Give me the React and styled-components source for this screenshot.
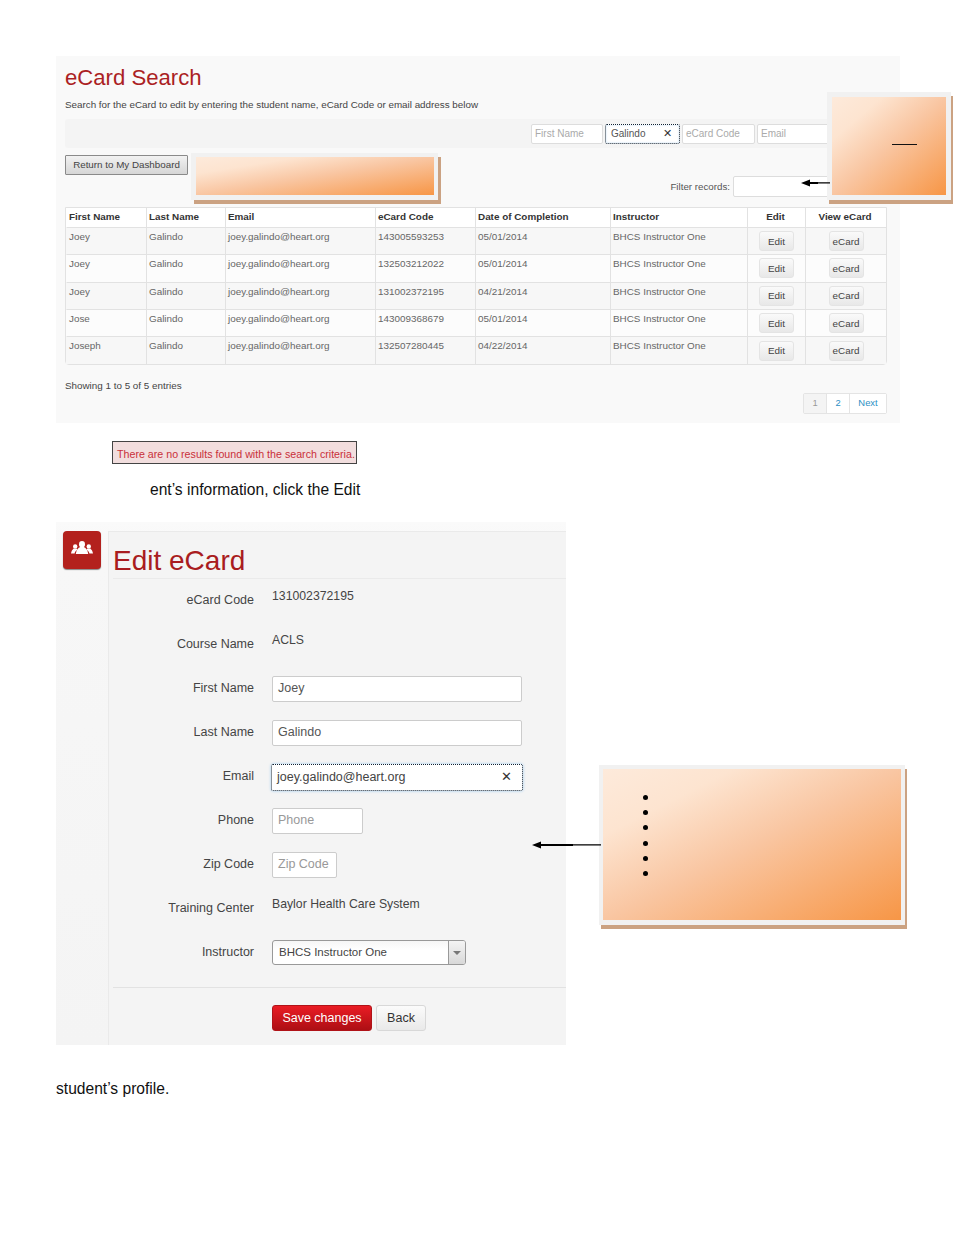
import React from "react";
import styled, { createGlobalStyle, css } from "styled-components";

const Global = createGlobalStyle`
  html, body { margin: 0; padding: 0; background: #fff; }
  body { font-family: "Liberation Sans", Arial, sans-serif; color: #555; }
  * { box-sizing: border-box; }
`;

const Page = styled.div`
  position: relative;
  width: 954px;
  height: 1235px;
  padding: 56px 0 0 56px;
  overflow: hidden;
`;

const SearchPanel = styled.section`
  width: 844px;
  height: 367px;
  padding: 9px 13px 0 9px;
  background: #f9f9f9;
`;

const SearchTitle = styled.h1`
  margin: 0;
  font-size: 22.15px;
  line-height: 26px;
  font-weight: 400;
  color: #ab1f24;
`;

const Lead = styled.p`
  margin: 7px 0 0;
  font-size: 9.84px;
  line-height: 13px;
  color: #444;
`;

const Toolbar = styled.div`
  display: flex;
  justify-content: flex-end;
  align-items: center;
  gap: 2px;
  height: 29px;
  margin-top: 8px;
  background: #f4f4f4;
  border-radius: 3px;
`;

const SmallField = styled.div`
  display: flex;
  align-items: center;
  justify-content: space-between;
  width: ${(p) => p.$w}px;
  height: 20px;
  padding: 0 7px 0 3px;
  font-size: 10px;
  color: ${(p) => (p.$filled ? "#555" : "#aaa")};
  background: #fff;
  border: 1px solid #ddd;
  border-radius: 2px;
  ${(p) =>
    p.$focus &&
    css`
      padding-left: 5px;
      border: 1px dotted #123;
      box-shadow: inset 0 0 2px #b9d8f2;
    `}
`;

const Clear = styled.span`
  font-size: ${(p) => p.$size}px;
  line-height: 1;
  color: #333;
`;

const ActionRow = styled.div`
  display: flex;
  justify-content: space-between;
  height: 59px;
  padding-top: 7px;
`;

const ReturnButton = styled.button`
  width: 123px;
  height: 20px;
  padding: 0 0 2px;
  font: 9.8px "Liberation Sans", Arial, sans-serif;
  color: #444;
  background: linear-gradient(#f2f2f2, #d6d6d6);
  border: 1px solid #8a8a8a;
  border-radius: 1px;
`;

const FilterWrap = styled.label`
  display: flex;
  align-items: center;
  gap: 3px;
  height: 22px;
  margin-top: 20px;
  margin-right: -4px;
  font-size: 9.75px;
  color: #555;
`;

const FilterInput = styled.div`
  width: 158px;
  height: 21px;
  background: #fff;
  border: 1px solid #ddd;
  border-radius: 2px;
`;

const Table = styled.table`
  width: 822px;
  table-layout: fixed;
  border-collapse: separate;
  border-spacing: 0;
  border: 1px solid #e2e2e2;
  border-radius: 0 0 4px 4px;
  font-size: 9.9px;
`;

const Th = styled.th`
  height: 20px;
  padding: 0 2px 2px ${(p) => (p.$center ? "0" : "2px")};
  font-weight: 700;
  color: #333;
  text-align: ${(p) => (p.$center ? "center" : "left")};
  background: #fff;
  border-left: 1px solid ${(p) => (p.$first ? "transparent" : "#e2e2e2")};
  border-bottom: 1px solid #e2e2e2;
`;

const Td = styled.td`
  height: 27.3px;
  padding: ${(p) => (p.$center ? "0" : "3px 2px 0 2px")};
  vertical-align: ${(p) => (p.$center ? "middle" : "top")};
  text-align: ${(p) => (p.$center ? "center" : "left")};
  line-height: 12px;
  color: #666;
  background: ${(p) => (p.$odd ? "#f7f7f7" : "#fcfcfc")};
  border-left: 1px solid ${(p) => (p.$first ? "transparent" : "#e2e2e2")};
  border-bottom: ${(p) => (p.$last ? "0" : "1px solid #e2e2e2")};
`;

const RowButton = styled.button`
  width: 35px;
  height: 20px;
  padding: 0;
  font: 9.9px "Liberation Sans", Arial, sans-serif;
  color: #444;
  background: linear-gradient(#fafafa, #e8e8e8);
  border: 1px solid #e4e4e4;
  border-radius: 3px;
  vertical-align: middle;
`;

const TableFoot = styled.div`
  display: grid;
  grid-template-rows: 13px 21px;
  width: 822px;
  margin-top: 15px;
  font-size: 9.85px;
  color: #444;
`;

const Pager = styled.div`
  display: flex;
  justify-self: end;
  height: 21px;
  border: 1px solid #e4e4e4;
  border-radius: 2px;
  background: #fff;
`;

const PageItem = styled.span`
  display: flex;
  align-items: center;
  justify-content: center;
  width: ${(p) => p.$w}px;
  padding-bottom: 2px;
  font-size: 9.4px;
  color: ${(p) => (p.$off ? "#999" : "#2d8fc4")};
  background: ${(p) => (p.$off ? "#f4f4f4" : "#fff")};
  & + & { border-left: 1px solid #e4e4e4; }
`;

const Alert = styled.div`
  width: 245px;
  height: 23px;
  margin: 18px 0 0 56px;
  padding-left: 4px;
  font-size: 10.68px;
  line-height: 24px;
  white-space: nowrap;
  color: #c9303a;
  background: #f2dede;
  border: 1px solid #444;
`;

const DocText = styled.p`
  margin: ${(p) => p.$top}px 0 0 ${(p) => p.$left}px;
  font-size: 15.6px;
  line-height: 18px;
  color: #111;
`;

const EditPanel = styled.section`
  display: flex;
  width: 510px;
  height: 523px;
  margin-top: 23px;
  background: linear-gradient(#fafafa, #f7f7f7 8%, #f4f4f4);
`;

const IconRail = styled.div`
  flex: 0 0 52px;
  padding: 9px 0 0 7px;
`;

const IconTile = styled.div`
  display: flex;
  align-items: center;
  justify-content: center;
  width: 38px;
  height: 38px;
  padding-bottom: 5px;
  background: #b3211d;
  border-radius: 4px;
  box-shadow: 0 1px 1px #888;
`;

const FormColumn = styled.div`
  flex: 1;
  margin-top: 9px;
  background: #f4f4f4;
  border-top: 1px solid #eaeaea;
  border-left: 1px solid #eaeaea;
`;

const FormTitle = styled.h2`
  height: 47px;
  margin: 0 0 0 4px;
  padding-top: 12px;
  font-size: 28px;
  line-height: 34px;
  font-weight: 400;
  color: #a91c20;
  border-bottom: 1px solid #eaeaea;
`;

const FormRows = styled.div`
  display: grid;
  grid-auto-rows: 44px;
  padding-top: 9px;
`;

const FormRow = styled.div`
  display: grid;
  grid-template-columns: 145px 1fr;
  column-gap: 18px;
  font-size: 12.5px;
`;

const FieldLabel = styled.div`
  line-height: 24px;
  text-align: right;
  color: #444;
`;

const StaticValue = styled.div`
  font-size: 12.25px;
  line-height: 16px;
  color: #444;
`;

const TextField = styled.div`
  display: flex;
  align-items: center;
  justify-content: space-between;
  width: ${(p) => p.$w}px;
  height: 26px;
  padding: 0 10px 2px 5px;
  font-size: 12.5px;
  color: ${(p) => (p.$placeholder ? "#999" : "#555")};
  background: #fff;
  border: 1px solid #ccc;
  border-radius: 2px;
  white-space: nowrap;
  ${(p) =>
    p.$focus &&
    css`
      margin: 0 0 0 -1px;
      height: 27px;
      color: #444;
      border: 1px dotted #123;
      box-shadow: 0 0 3px #9cc8ee;
    `}
`;

const SelectBox = styled.div`
  display: flex;
  width: 194px;
  height: 25px;
  font-size: 11.5px;
  color: #444;
  background: linear-gradient(#f6f6f6, #fff 40%);
  border: 1px solid #999;
  border-radius: 3px;
  overflow: hidden;
`;

const SelectText = styled.span`
  flex: 1;
  padding-left: 6px;
  line-height: 23px;
`;

const SelectArrow = styled.span`
  display: flex;
  align-items: center;
  justify-content: center;
  width: 17px;
  background: linear-gradient(#f4f4f4, #d8d8d8);
  border-left: 1px solid #999;
  &::after {
    content: "";
    border-style: solid;
    border-width: 4px 4px 0;
    border-color: #777 transparent transparent;
  }
`;

const FormFooter = styled.div`
  display: flex;
  gap: 4px;
  margin: 3px 0 0 4px;
  padding: 17px 0 0 159px;
  border-top: 1px solid #e2e2e2;
`;

const SaveButton = styled.button`
  width: 100px;
  height: 26px;
  padding: 0;
  font: 12.5px "Liberation Sans", Arial, sans-serif;
  color: #fff;
  background: linear-gradient(#ea1c24, #ad0f14);
  border: 1px solid #b01318;
  border-radius: 3px;
`;

const BackButton = styled.button`
  width: 50px;
  height: 26px;
  padding: 0;
  font: 12.5px "Liberation Sans", Arial, sans-serif;
  color: #333;
  background: linear-gradient(#fbfbfb, #e9e9e9);
  border: 1px solid #d8d8d8;
  border-radius: 3px;
`;

const placements = {
  banner: css`
    left: 191px; top: 153px; width: 247px; height: 47px;
    padding: 4px 4px 5px 5px;
    box-shadow: 3px 4px 0 #cba282;
  `,
  corner: css`
    left: 827px; top: 92px; width: 124px; height: 108px;
    padding: 5px;
    box-shadow: 2px 4px 0 #cba282;
  `,
  side: css`
    left: 599px; top: 765px; width: 306px; height: 160px;
    padding: 4px 4px 5px;
    box-shadow: 2px 4px 0 #cba282;
  `,
};

const Callout = styled.aside`
  position: absolute;
  background: #f1f1f1;
  ${(p) => placements[p.$at]}
`;

const CalloutFill = styled.div`
  position: relative;
  height: 100%;
  background: linear-gradient(to bottom right, #fdeadb 0%, #fde4d0 22%, #f9c6a2 50%, #f79646 100%);
`;

const Dash = styled.span`
  position: absolute;
  left: 60px;
  top: 47px;
  width: 25px;
  height: 1px;
  background: #111;
`;

const Bullets = styled.ul`
  display: flex;
  flex-direction: column;
  gap: 10.2px;
  margin: 0;
  padding: 26px 0 0 40px;
  list-style: none;
`;

const Bullet = styled.li`
  width: 5px;
  height: 5px;
  background: #000;
  border-radius: 50%;
`;

const ArrowMark = styled.svg`
  position: absolute;
  ${(p) =>
    p.$at === "filter"
      ? css`left: 800px; top: 178px;`
      : css`left: 531px; top: 840px;`}
`;

const Arrow = ({ at, w }) => {
  const mid = Math.round(w * 0.6);
  return (
    <ArrowMark $at={at} width={w} height="10" viewBox={`0 0 ${w} 10`} aria-hidden="true">
      <path d={`M1 5 L10 1.500 V4 H${mid} V4.300 H${w} V5.500 H${mid} V6 H10 V8.500 Z`} fill="#000" />
    </ArrowMark>
  );
};

const GroupIcon = () => (
  <svg width="22" height="13" viewBox="0 0 22 13" fill="#fff" aria-hidden="true">
    <ellipse cx="11" cy="3.300" rx="3" ry="3.300" />
    <path d="M4.800 13c.3-3.300 2-6 4.400-7h3.600c2.400 1 4.100 3.700 4.400 7z" />
    <circle cx="4.200" cy="5.400" r="2.200" />
    <path d="M0 12.400c.3-2.300 1.300-4 2.800-5h2.600l1.200 1.200C5 9.800 3.900 11 3.600 12.400z" />
    <circle cx="17.800" cy="5.400" r="2.200" />
    <path d="M22 12.400c-.3-2.300-1.300-4-2.800-5h-2.600l-1.200 1.200c1.600 1.200 2.700 2.400 3 3.800z" />
  </svg>
);

const rows = [
  ["Joey", "143005593253", "05/01/2014"],
  ["Joey", "132503212022", "05/01/2014"],
  ["Joey", "131002372195", "04/21/2014"],
  ["Jose", "143009368679", "05/01/2014"],
  ["Joseph", "132507280445", "04/22/2014"],
];

const colWidths = [80, 79, 150, 100, 135, 137, 58, 81];

export default function App() {
  return (
    <Page>
      <Global />
      <SearchPanel>
        <SearchTitle>eCard Search</SearchTitle>
        <Lead>Search for the eCard to edit by entering the student name, eCard Code or email address below</Lead>
        <Toolbar>
          <SmallField $w={72}>First Name</SmallField>
          <SmallField $w={75} $focus $filled>
            Galindo<Clear $size={11}>✕</Clear>
          </SmallField>
          <SmallField $w={73}>eCard Code</SmallField>
          <SmallField $w={130}>Email</SmallField>
        </Toolbar>
        <ActionRow>
          <ReturnButton>Return to My Dashboard</ReturnButton>
          <FilterWrap>
            Filter records:
            <FilterInput />
          </FilterWrap>
        </ActionRow>
        <Table>
          <colgroup>
            {colWidths.map((w, i) => (
              <col key={i} width={w} />
            ))}
          </colgroup>
          <thead>
            <tr>
              <Th $first>First Name</Th>
              <Th>Last Name</Th>
              <Th>Email</Th>
              <Th>eCard Code</Th>
              <Th>Date of Completion</Th>
              <Th>Instructor</Th>
              <Th $center>Edit</Th>
              <Th $center>View eCard</Th>
            </tr>
          </thead>
          <tbody>
            {rows.map(([first, code, date], i) => {
              const props = { $odd: i % 2 === 0, $last: i === rows.length - 1 };
              return (
                <tr key={code}>
                  <Td {...props} $first>{first}</Td>
                  <Td {...props}>Galindo</Td>
                  <Td {...props}>joey.galindo@heart.org</Td>
                  <Td {...props}>{code}</Td>
                  <Td {...props}>{date}</Td>
                  <Td {...props}>BHCS Instructor One</Td>
                  <Td {...props} $center><RowButton>Edit</RowButton></Td>
                  <Td {...props} $center><RowButton>eCard</RowButton></Td>
                </tr>
              );
            })}
          </tbody>
        </Table>
        <TableFoot>
          <div>Showing 1 to 5 of 5 entries</div>
          <Pager>
            <PageItem $w={22} $off>1</PageItem>
            <PageItem $w={23}>2</PageItem>
            <PageItem $w={37}>Next</PageItem>
          </Pager>
        </TableFoot>
      </SearchPanel>

      <Alert>There are no results found with the search criteria.</Alert>
      <DocText $top={17} $left={94}>ent’s information, click the Edit</DocText>

      <EditPanel>
        <IconRail>
          <IconTile><GroupIcon /></IconTile>
        </IconRail>
        <FormColumn>
          <FormTitle>Edit eCard</FormTitle>
          <FormRows>
            <FormRow><FieldLabel>eCard Code</FieldLabel><StaticValue>131002372195</StaticValue></FormRow>
            <FormRow><FieldLabel>Course Name</FieldLabel><StaticValue>ACLS</StaticValue></FormRow>
            <FormRow><FieldLabel>First Name</FieldLabel><div><TextField $w={250}>Joey</TextField></div></FormRow>
            <FormRow><FieldLabel>Last Name</FieldLabel><div><TextField $w={250}>Galindo</TextField></div></FormRow>
            <FormRow>
              <FieldLabel>Email</FieldLabel>
              <div><TextField $w={252} $focus>joey.galindo@heart.org<Clear $size={13}>✕</Clear></TextField></div>
            </FormRow>
            <FormRow><FieldLabel>Phone</FieldLabel><div><TextField $w={91} $placeholder>Phone</TextField></div></FormRow>
            <FormRow><FieldLabel>Zip Code</FieldLabel><div><TextField $w={65} $placeholder>Zip Code</TextField></div></FormRow>
            <FormRow><FieldLabel>Training Center</FieldLabel><StaticValue>Baylor Health Care System</StaticValue></FormRow>
            <FormRow>
              <FieldLabel>Instructor</FieldLabel>
              <div>
                <SelectBox>
                  <SelectText>BHCS Instructor One</SelectText>
                  <SelectArrow />
                </SelectBox>
              </div>
            </FormRow>
          </FormRows>
          <FormFooter>
            <SaveButton>Save changes</SaveButton>
            <BackButton>Back</BackButton>
          </FormFooter>
        </FormColumn>
      </EditPanel>

      <DocText $top={35} $left={0}>student’s profile.</DocText>

      <Callout $at="banner"><CalloutFill /></Callout>
      <Callout $at="corner"><CalloutFill><Dash /></CalloutFill></Callout>
      <Callout $at="side">
        <CalloutFill>
          <Bullets>
            {[0, 1, 2, 3, 4, 5].map((i) => <Bullet key={i} />)}
          </Bullets>
        </CalloutFill>
      </Callout>
      <Arrow at="filter" w={30} />
      <Arrow at="side" w={70} />
    </Page>
  );
}
